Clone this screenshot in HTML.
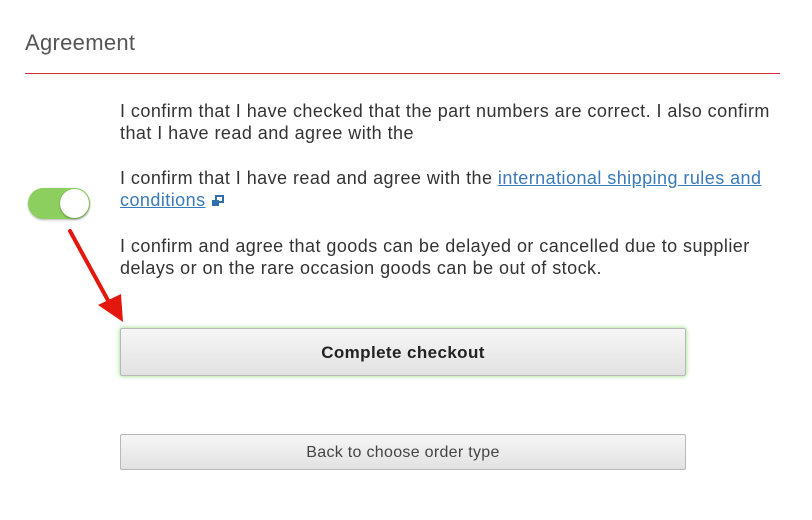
<!DOCTYPE html>
<html><head><style>
body{margin:0;width:812px;height:520px;background:#fff;font-family:"Liberation Sans",sans-serif;color:#333;position:relative;overflow:hidden}
.t{position:absolute;left:120px;font-size:18px;line-height:22px;color:#333;width:680px;letter-spacing:0.45px;white-space:nowrap}
a{color:#3a7ab8;text-decoration:underline}
.btn{position:absolute;left:120px;width:564px;border:1px solid #b8b8b8;background:linear-gradient(#f6f6f6,#e2e2e2);text-align:center;color:#222;border-radius:2px}
</style></head><body>
<div style="position:absolute;left:25px;top:30px;font-size:22px;color:#555;letter-spacing:0.3px">Agreement</div>
<div style="position:absolute;left:25px;top:73px;width:755px;height:1px;background:#d0303c"></div>
<div class="t" style="top:100px">I confirm that I have checked that the part numbers are correct. I also confirm<br>that I have read and agree with the</div>
<div class="t" style="top:167px">I confirm that I have read and agree with the <a>international shipping rules and</a><br><a>conditions</a> <svg width="14" height="12" viewBox="0 0 14 12" style="vertical-align:-1px"><rect x="5" y="1" width="7" height="6" fill="none" stroke="#2f6fb0" stroke-width="2"/><rect x="1" y="5" width="7" height="6" fill="#2f6fb0"/></svg></div>
<div class="t" style="top:235px">I confirm and agree that goods can be delayed or cancelled due to supplier<br>delays or on the rare occasion goods can be out of stock.</div>
<div style="position:absolute;left:28px;top:188px;width:62px;height:31px;border-radius:16px;background:#8ccf5e;box-shadow:0 1px 2px rgba(0,0,0,.3)"></div>
<div style="position:absolute;left:60px;top:189px;width:29px;height:29px;border-radius:50%;background:#fff;box-shadow:0 1px 2px rgba(0,0,0,.3)"></div>
<svg style="position:absolute;left:0;top:0" width="812" height="520"><line x1="70" y1="231" x2="110" y2="304" stroke="#e3170d" stroke-width="4" stroke-linecap="round"/><polygon points="123,322 98,305 121,294" fill="#e3170d"/></svg>
<div class="btn" style="top:328px;height:46px;line-height:48px;font-weight:bold;font-size:17px;letter-spacing:0.4px;box-shadow:0 0 5px #8fdc7a">Complete checkout</div>
<div class="btn" style="top:434px;height:34px;line-height:36px;font-size:16px;color:#444;letter-spacing:0.3px">Back to choose order type</div>
</body></html>
